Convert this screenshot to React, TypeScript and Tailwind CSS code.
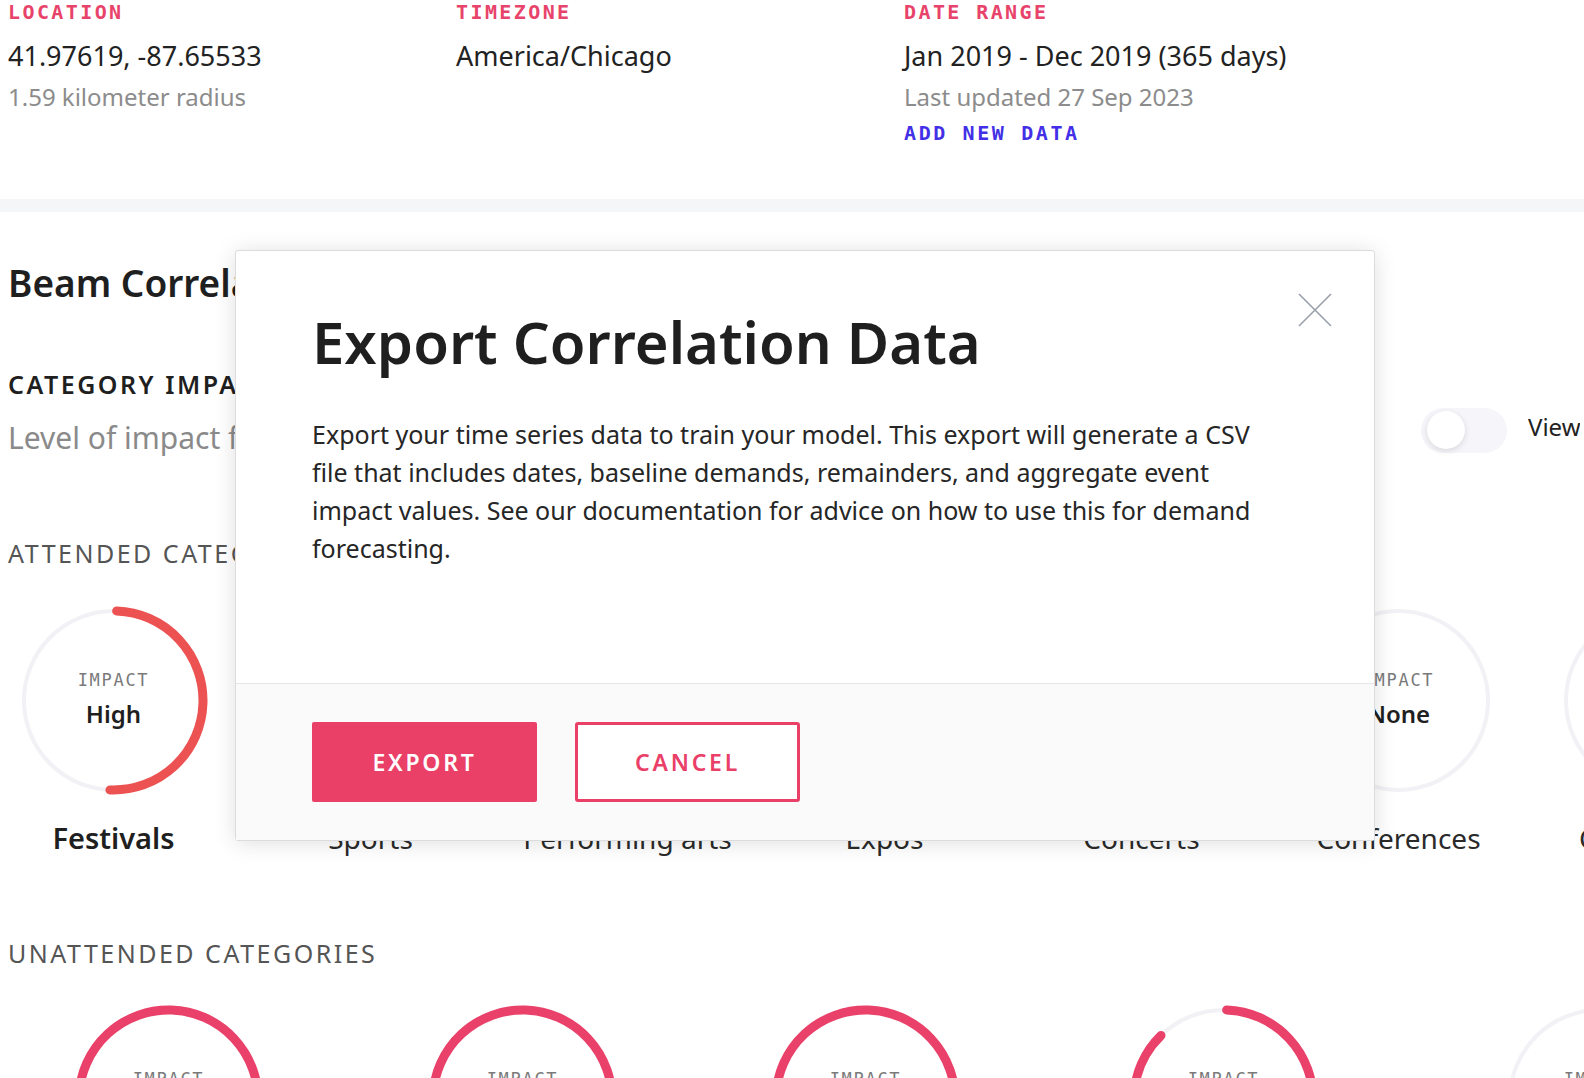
import React from "react";

type Category = {
  name: string;
  impact: string;
  pct: number;
  color: string;
  bold?: boolean;
  gap?: string;
};

const attended: Category[] = [
  { name: "Festivals", impact: "High", pct: 50, color: "#ec5252", bold: true },
  { name: "Sports", impact: "Medium", pct: 35, color: "#ec5252" },
  { name: "Performing arts", impact: "Low", pct: 20, color: "#ec5252" },
  { name: "Expos", impact: "Low", pct: 15, color: "#ec5252" },
  { name: "Concerts", impact: "Low", pct: 10, color: "#ec5252" },
  { name: "Conferences", impact: "None", pct: 0, color: "#ec5252" },
  { name: "Community", impact: "None", pct: 0, color: "#ec5252" },
];

// spacing between the unattended rings follows the label widths in the original layout
const unattended: Category[] = [
  { name: "Severe weather", impact: "High", pct: 100, color: "#e9416a", gap: "ml-[74px]" },
  { name: "Public holidays", impact: "High", pct: 100, color: "#e9416a", gap: "ml-[165px]" },
  { name: "School holidays", impact: "High", pct: 100, color: "#e9416a", gap: "ml-[154px]" },
  { name: "Observances", impact: "High", pct: 87, color: "#e9416a", gap: "ml-[169px]" },
  { name: "Daylight savings", impact: "None", pct: 0, color: "#e9416a", gap: "ml-[187px]" },
];

function Ring({ pct, color, impact }: { pct: number; color: string; impact: string }) {
  const r = 89.5;
  const circ = 2 * Math.PI * r;
  return (
    <div className="relative w-[189px] h-[189px]">
      <svg width="189" height="189" viewBox="0 0 189 189" className="block">
        <circle cx="94.5" cy="94.5" r={r} fill="none" stroke="#f1f1f6" strokeWidth="4" />
        {pct > 0 && (
          <circle
            cx="94.5"
            cy="94.5"
            r={r}
            fill="none"
            stroke={color}
            strokeWidth="9"
            strokeLinecap={pct >= 100 ? "butt" : "round"}
            strokeDasharray={`${(circ * pct) / 100} ${circ}`}
            transform="rotate(-88 94.5 94.5)"
          />
        )}
      </svg>
      <div className="absolute inset-0 flex flex-col items-center justify-center pb-[2px]">
        <span className="font-['DejaVu_Sans_Mono',monospace] text-[17px] leading-[20px] tracking-[0.1em] text-[#7a7a7a]">
          IMPACT
        </span>
        <span className="mt-[9px] text-[24px] leading-[30px] font-semibold text-[#1f1f1f]">{impact}</span>
      </div>
    </div>
  );
}

function Metric({ label, value, sub, link }: { label: string; value: string; sub?: string; link?: string }) {
  return (
    <div className="w-[448px] shrink-0">
      <div className="font-['DejaVu_Sans_Mono',monospace] font-bold text-[20px] leading-[24px] tracking-[0.12em] text-[#e8436a]">
        {label}
      </div>
      <div className="mt-[14px] text-[27px] leading-[36px] text-[#222]">{value}</div>
      {sub && <div className="mt-[7px] text-[24px] leading-[32px] text-[#8c8c8c]">{sub}</div>}
      {link && (
        <div className="mt-[8px] font-['DejaVu_Sans_Mono',monospace] font-bold text-[20px] leading-[24px] tracking-[0.13em] text-[#4330e6]">
          {link}
        </div>
      )}
    </div>
  );
}

export default function App() {
  return (
    <div className="relative w-[1584px] h-[1078px] overflow-hidden bg-white font-['Noto_Sans',sans-serif] text-[#222]">
      {/* summary header */}
      <div className="flex pl-[8px]">
        <Metric label="LOCATION" value="41.97619, -87.65533" sub="1.59 kilometer radius" />
        <Metric label="TIMEZONE" value="America/Chicago" />
        <Metric
          label="DATE RANGE"
          value="Jan 2019 - Dec 2019 (365 days)"
          sub="Last updated 27 Sep 2023"
          link="ADD NEW DATA"
        />
      </div>

      <div className="mt-[54px] h-[13px] bg-[#f5f6f8]" />

      <div className="pl-[8px]">
        <h2 className="mt-[47px] text-[37px] leading-[48px] font-semibold text-[#1f1f1f]">Beam Correlation</h2>

        <div className="mt-[61px] text-[25px] leading-[32px] font-semibold tracking-[0.1em] text-[#1f1f1f]">
          CATEGORY IMPACT
        </div>
        <div className="mt-[18px] flex items-center h-[40px]">
          <div className="text-[30px] leading-[40px] text-[#8a8a8a]">Level of impact for event categories</div>
          <div className="ml-auto flex items-center gap-[21px] -translate-y-[8px] -translate-x-[4px]">
            <div className="w-[86px] h-[45px] rounded-full bg-[#f5f5fa] flex items-center px-[6px]">
              <div className="w-[38px] h-[38px] rounded-full bg-white shadow-[0_2px_6px_rgba(0,0,0,0.12)]" />
            </div>
            <span className="-translate-y-[3px] text-[24px] leading-[32px] text-[#222] whitespace-nowrap w-[52px] overflow-hidden">
              View as list
            </span>
          </div>
        </div>

        <div className="mt-[79px] text-[25px] leading-[32px] tracking-[0.1em] text-[#555]">ATTENDED CATEGORIES</div>
      </div>

      <div className="mt-[37px] flex gap-[68px] pl-[19px]">
        {attended.map((c) => (
          <div key={c.name} className="w-[189px] shrink-0 flex flex-col items-center">
            <Ring pct={c.pct} color={c.color} impact={c.impact} />
            <div
              className={
                c.bold
                  ? "mt-[23px] text-[29px] leading-[40px] font-semibold text-[#1f1f1f] whitespace-nowrap"
                  : "mt-[23px] text-[28px] leading-[40px] text-[#2a2a2a] whitespace-nowrap"
              }
            >
              {c.name}
            </div>
          </div>
        ))}
      </div>

      <div className="pl-[8px] mt-[79px] text-[25px] leading-[32px] tracking-[0.1em] text-[#555]">
        UNATTENDED CATEGORIES
      </div>

      <div className="mt-[36px] flex">
        {unattended.map((c) => (
          <div key={c.name} className={`${c.gap} w-[189px] shrink-0 flex flex-col items-center`}>
            <Ring pct={c.pct} color={c.color} impact={c.impact} />
            <div className="mt-[23px] text-[28px] leading-[40px] text-[#2a2a2a] whitespace-nowrap">{c.name}</div>
          </div>
        ))}
      </div>

      {/* export dialog */}
      <div className="absolute left-[235px] top-[250px] w-[1140px] rounded-[3px] border border-[#dcdcdf] bg-white shadow-[0_2px_22px_rgba(0,0,0,0.13)]">
        <button className="absolute top-[42px] right-[42px] w-[34px] h-[34px] flex items-center justify-center">
          <svg width="34" height="34" viewBox="0 0 34 34" fill="none">
            <path d="M1 1L33 33M33 1L1 33" stroke="#9aa0ab" strokeWidth="1.6" />
          </svg>
        </button>
        <div className="h-[432px] px-[76px] pt-[55px]">
          <h1 className="text-[58px] leading-[72px] font-semibold text-[#1f1f1f]">Export Correlation Data</h1>
          <p className="mt-[37px] w-[960px] text-[25px] leading-[38px] text-[#262626]">
            Export your time series data to train your model. This export will generate a CSV file that includes dates,
            baseline demands, remainders, and aggregate event impact values. See our documentation for advice on how to
            use this for demand forecasting.
          </p>
        </div>
        <div className="border-t border-[#e6e6ea] bg-[#fafafb] px-[76px] py-[38px] flex gap-[38px]">
          <button className="w-[225px] h-[80px] rounded-[2px] bg-[#ea4068] text-white text-[23px] font-semibold tracking-[0.12em]">
            EXPORT
          </button>
          <button className="w-[225px] h-[80px] rounded-[3px] border-[3px] border-[#ea4068] bg-white text-[#ea4068] text-[23px] font-semibold tracking-[0.12em]">
            CANCEL
          </button>
        </div>
      </div>
    </div>
  );
}
